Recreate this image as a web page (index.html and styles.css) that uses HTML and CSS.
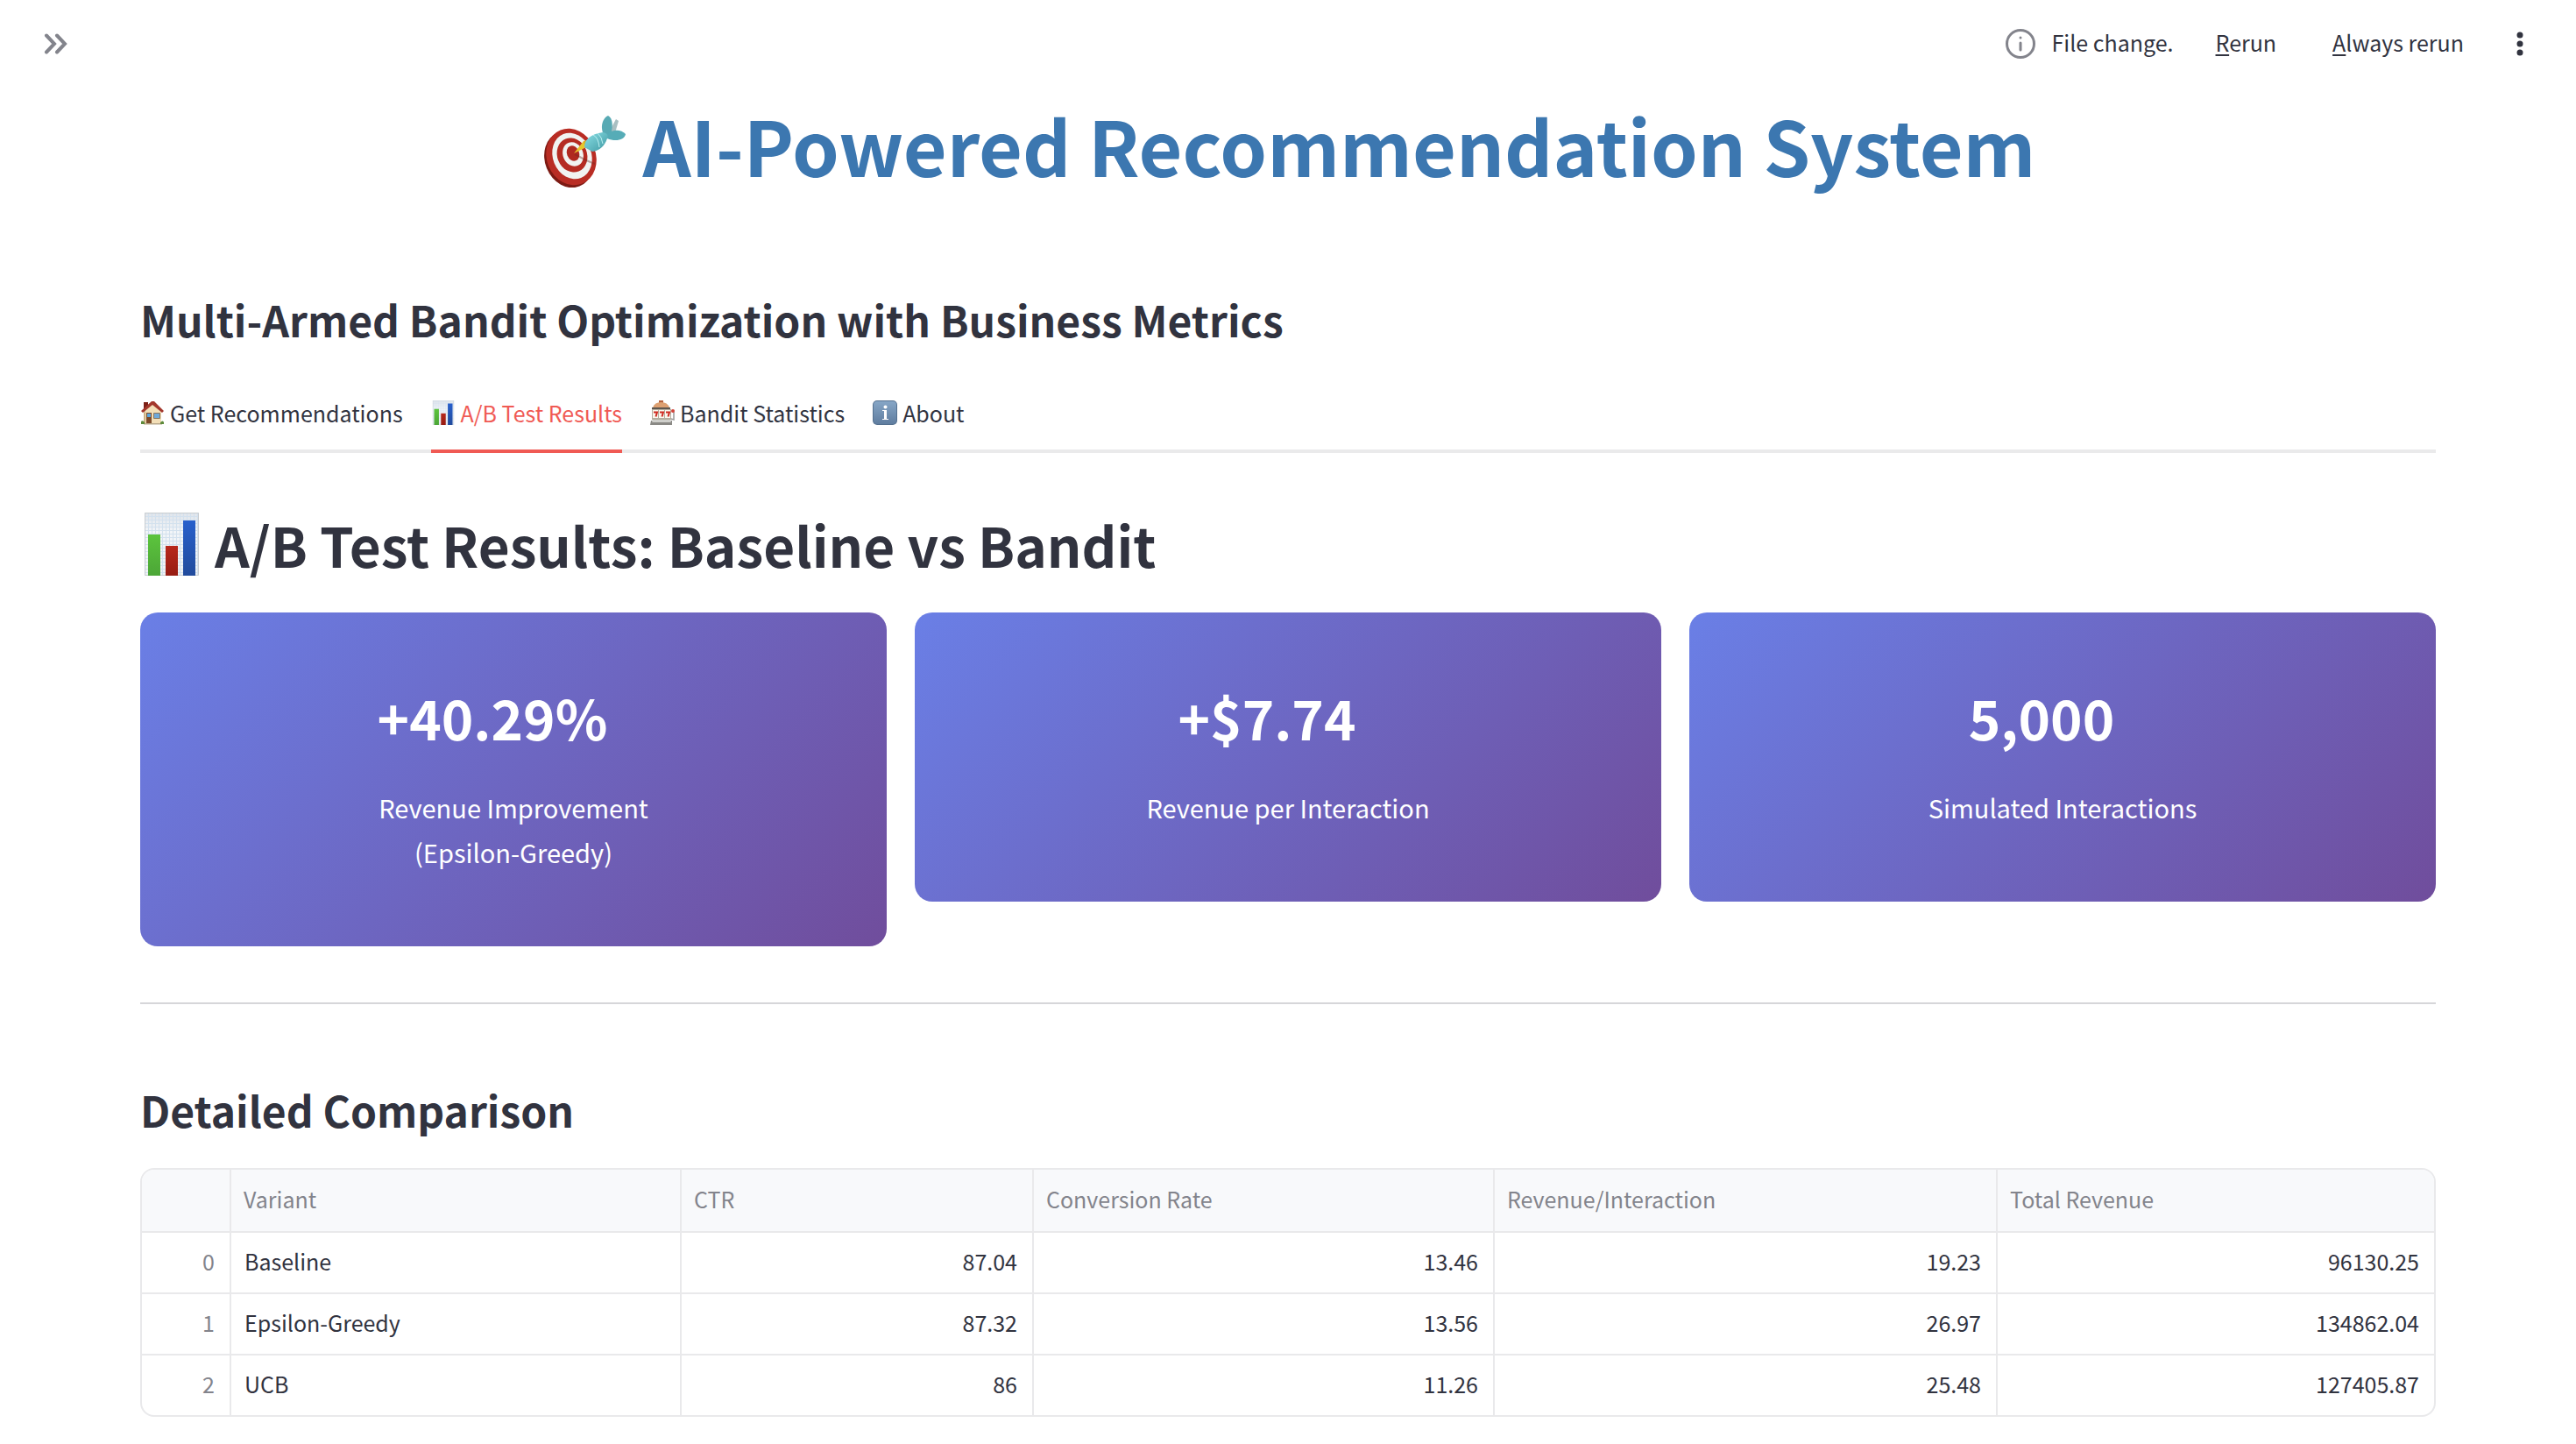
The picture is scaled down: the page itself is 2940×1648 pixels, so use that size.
FILE: index.html
```html
<!DOCTYPE html>
<html lang="en">
<head>
<meta charset="utf-8">
<title>AI-Powered Recommendation System</title>
<link rel="stylesheet" href="styles.css">
</head>
<body>
<svg class="sprite" aria-hidden="true">
  <defs>
    <linearGradient id="paper" x1="0" y1="0" x2="0" y2="1"><stop offset="0" stop-color="#dfe4ea"/><stop offset=".3" stop-color="#f2f5f8"/><stop offset="1" stop-color="#eef1f4"/></linearGradient>
    <linearGradient id="green" x1="0" y1="0" x2="0" y2="1"><stop offset="0" stop-color="#5cc43d"/><stop offset="1" stop-color="#4ca637"/></linearGradient>
    <linearGradient id="red" x1="0" y1="0" x2="0" y2="1"><stop offset="0" stop-color="#b8281c"/><stop offset="1" stop-color="#961c12"/></linearGradient>
    <linearGradient id="blue" x1="0" y1="0" x2="0" y2="1"><stop offset="0" stop-color="#2860cc"/><stop offset="1" stop-color="#214b9c"/></linearGradient>
    <linearGradient id="tile" x1="0" y1="0" x2="0" y2="1"><stop offset="0" stop-color="#86a6c6"/><stop offset="1" stop-color="#5f7d9f"/></linearGradient>
    <linearGradient id="dart" x1="0" y1="0" x2="1" y2="1"><stop offset="0" stop-color="#8be0e6"/><stop offset="1" stop-color="#3f98a2"/></linearGradient>
    <pattern id="grid" width="4" height="4" patternUnits="userSpaceOnUse"><path d="M0 .5H4M.5 0V4" stroke="#d3e1ee" stroke-width="1"/></pattern>
    <symbol id="chart" viewBox="0 0 62 72">
      <path fill="url(#paper)" d="M0 0h62v72H0z"/>
      <path fill="url(#grid)" d="M0 0h62v72H0z"/>
      <path fill="none" stroke="#c9cdd1" d="M.5.5h61v71H.5z"/>
      <path fill="url(#green)" d="M4 25h14v47H4z"/>
      <path fill="url(#red)" d="M24 38h14v34H24z"/>
      <path fill="url(#blue)" d="M44 9h14v63H44z"/>
    </symbol>
  </defs>
</svg>

<header class="toolbar">
  <button class="icon-button" aria-label="Open sidebar">
    <svg class="chevrons" viewBox="0 0 28 24"><path d="M3 2.500l9 9.500-9 9.500M15 2.500l9 9.500-9 9.500"/></svg>
  </button>
  <div class="status">
    <svg class="info" viewBox="0 0 36 36"><circle cx="18" cy="18" r="15.500"/><path d="M18 17v8"/><path d="M18 11v.1"/></svg>
    <span class="status-text">File change.</span>
    <button class="text-button"><u>R</u>erun</button>
    <button class="text-button"><u>A</u>lways rerun</button>
    <button class="icon-button" aria-label="Menu">
      <svg class="dots" viewBox="0 0 8 28"><circle cx="4" cy="4" r="3.500"/><circle cx="4" cy="14" r="3.500"/><circle cx="4" cy="24" r="3.500"/></svg>
    </button>
  </div>
</header>

<main class="page">
  <h1 class="title">
    <svg class="target" viewBox="0 0 96 82" aria-hidden="true">
      <ellipse cx="30" cy="50" rx="27" ry="33" transform="rotate(-22 30 50)" fill="#7c1a13"/>
      <ellipse cx="33" cy="47" rx="28" ry="33" transform="rotate(-22 33 47)" fill="#b92d24"/>
      <ellipse cx="34" cy="46" rx="22" ry="27" transform="rotate(-22 34 46)" fill="#f1f3f1"/>
      <ellipse cx="34" cy="45" rx="17" ry="20" transform="rotate(-22 34 45)" fill="#b52b22"/>
      <ellipse cx="35" cy="44" rx="11.500" ry="14" transform="rotate(-22 35 44)" fill="#f1f3f1"/>
      <ellipse cx="35" cy="43" rx="7" ry="9" transform="rotate(-22 35 43)" fill="#b02920"/>
      <path d="M37 44l13 7 10 4" stroke="#6d2a24" stroke-opacity=".4" stroke-width="2" fill="none"/>
      <path d="M36 43l11-14 5 6z" fill="#e6c62c"/>
      <path d="M47 29l8-2 1 9-7 1z" fill="#d6b021"/>
      <path d="M77 17L84 4l3 2-5 17z" fill="#a9bfc2"/>
      <path d="M70 22C65 11 70 2 75 0c6 3 6 14 2 24z" fill="#58aab4"/>
      <path d="M74 21c7-6 16-5 21 0-1 7-12 9-21 5z" fill="#56acb7"/>
      <path d="M48 36c0-9 7-15 21-17 5 1 7 4 5 7-3 9-9 14-17 15z" fill="url(#dart)"/>
      <path d="M58 22q6 3 7 14M63 20q5 4 6 12" stroke="#b9f0f2" stroke-width="1" fill="none"/>
    </svg>
    AI-Powered Recommendation System
  </h1>
  <h3 class="section-heading">Multi-Armed Bandit Optimization with Business Metrics</h3>

  <div class="tabs" role="tablist">
    <button class="tab" role="tab" aria-selected="false">
      <svg class="emoji" viewBox="0 0 28 28" aria-hidden="true">
        <path fill="#f3dfb8" d="M4 13L14 4l10 9v14H4z"/>
        <path fill="#cdb184" d="M4 14l2-2v15H4z"/>
        <path fill="#7b1f16" d="M4 2h5v6l-5 5z"/>
        <path fill="#a3372c" d="M1 12L13 1h3l11 11-2 2L14 5 3 14z"/>
        <path fill="#7d4a2a" d="M7 14h6v13H7z"/>
        <path fill="#5aa6e0" d="M8 15h4v4H8z"/>
        <path fill="#6fa9da" stroke="#8a765c" d="M15.500 14.500h7v6h-7z"/>
        <path fill="#b9a98c" d="M4 26h21v1.500H4z"/>
        <path fill="#5d8a3a" d="M1 24q2-2 4 1v2H1zM23 25q3-3 4 0v2h-4z"/>
      </svg>
      Get Recommendations
    </button>
    <button class="tab active" role="tab" aria-selected="true">
      <svg class="emoji" aria-hidden="true"><use href="#chart"/></svg>
      A/B Test Results
    </button>
    <button class="tab" role="tab" aria-selected="false">
      <svg class="emoji" viewBox="0 0 28 28" aria-hidden="true">
        <path fill="#b4603b" d="M10 0h5v3h-5z"/>
        <path fill="#dda071" d="M3 8q2-6 9.500-6T22 8z"/>
        <path fill="#5d574f" d="M2 8h21v2H2z"/>
        <path fill="#b5ae9f" d="M2 10h22v12H2z"/>
        <path fill="#fbf6ec" d="M3 11h6v9H3zM10 11h6v9h-6zM17 11h6v9h-6z"/>
        <path fill="none" stroke="#cf2a20" stroke-width="2" d="M4 13.500h4l-1.500 5M11 13.500h4l-1.500 5M18 13.500h4l-1.500 5"/>
        <path fill="#8a8985" d="M1 23h24v5H0z"/>
        <path fill="#cfcfcb" d="M3 22h20l1 3H2z"/>
        <path fill="none" stroke="#999" stroke-width="1.500" d="M24 21l3 1v-9"/><circle cx="26" cy="12" r="2" fill="#d2443a"/>
      </svg>
      Bandit Statistics
    </button>
    <button class="tab" role="tab" aria-selected="false">
      <svg class="emoji" viewBox="0 0 28 28" aria-hidden="true">
        <rect width="28" height="28" rx="5" fill="#54708f"/>
        <rect x="1" y="1" width="26" height="26" rx="4" fill="url(#tile)"/>
        <circle cx="14.500" cy="7.500" r="2" fill="#fff"/><path fill="#fff" d="M11 11h5v10h2v1h-7v-1h2v-9h-2z"/>
      </svg>
      About
    </button>
  </div>

  <h2 class="results-heading"><svg class="chart-icon" aria-hidden="true"><use href="#chart"/></svg>A/B Test Results: Baseline vs Bandit</h2>

  <section class="cards">
    <article class="card"><h2 class="value">+40.29%</h2><p class="label">Revenue Improvement<br>(Epsilon-Greedy)</p></article>
    <article class="card"><h2 class="value">+$7.74</h2><p class="label">Revenue per Interaction</p></article>
    <article class="card"><h2 class="value">5,000</h2><p class="label">Simulated Interactions</p></article>
  </section>

  <hr class="divider">

  <h3 class="section-heading">Detailed Comparison</h3>
  <div class="table-frame">
    <table class="data">
      <colgroup><col class="c-index"><col class="c-variant"><col class="c-ctr"><col class="c-rate"><col class="c-rev"><col class="c-total"></colgroup>
      <thead><tr><th></th><th>Variant</th><th>CTR</th><th>Conversion Rate</th><th>Revenue/Interaction</th><th>Total Revenue</th></tr></thead>
      <tbody>
        <tr><td class="index">0</td><td class="name">Baseline</td><td>87.04</td><td>13.46</td><td>19.23</td><td>96130.25</td></tr>
        <tr><td class="index">1</td><td class="name">Epsilon-Greedy</td><td>87.32</td><td>13.56</td><td>26.97</td><td>134862.04</td></tr>
        <tr><td class="index">2</td><td class="name">UCB</td><td>86</td><td>11.26</td><td>25.48</td><td>127405.87</td></tr>
      </tbody>
    </table>
  </div>
</main>
</body>
</html>
```
FILE: styles.css
```css
* { box-sizing: border-box; }

body {
  margin: 0;
  background: #fff;
  color: #31333f;
  font-family: "Noto Sans CJK SC", "Noto Sans", sans-serif;
  font-size: 25px;
  line-height: 40px;
}

h1, h2, h3, p { margin: 0; }

button {
  border: 0;
  padding: 0;
  background: none;
  color: inherit;
  font: inherit;
  cursor: pointer;
}

.sprite { position: absolute; width: 0; height: 0; }

.toolbar {
  display: flex;
  align-items: center;
  justify-content: space-between;
  height: 100px;
  padding: 0 48px 0 50px;
}

.icon-button { display: flex; }
.chevrons { width: 28px; height: 24px; fill: none; stroke: #83848c; stroke-width: 4; stroke-linecap: round; }

.status { display: flex; align-items: center; }
.info { width: 36px; height: 36px; margin-right: 18px; fill: none; stroke: #83848c; stroke-width: 3; stroke-linecap: round; }
.status-text { margin-right: 48px; padding-bottom: 4px; }
.text-button { margin-right: 64px; padding-bottom: 4px; }
.text-button:nth-last-child(2) { margin-right: 60px; }
.text-button + .icon-button { margin-right: 12px; }
.text-button u { text-underline-offset: 3px; }
.dots { width: 8px; height: 28px; fill: #31333f; }

.page { padding: 0 160px 32px; }

.title {
  display: flex;
  align-items: center;
  justify-content: center;
  gap: 18px;
  height: 130px;
  padding-left: 3px;
  color: #3c77b0;
  font-size: 86px;
  font-weight: 700;
  line-height: 130px;
}
.target { width: 96px; height: 82px; margin-top: 16px; }

.section-heading {
  font-size: 48px;
  font-weight: 600;
  line-height: 68px;
}
.title + .section-heading { margin-top: 100px; }

.tabs {
  display: flex;
  gap: 32px;
  margin-top: 34px;
  border-bottom: 4px solid #eaeaeb;
}
.tab {
  display: flex;
  align-items: center;
  gap: 6px;
  height: 85px;
  margin-bottom: -4px;
  padding-bottom: 4px;
  border-bottom: 4px solid transparent;
}
.tab.active { color: #f05a54; border-color: #f05a54; }
.emoji { width: 28px; height: 28px; }

.results-heading {
  display: flex;
  align-items: center;
  gap: 18px;
  height: 86px;
  margin-top: 61px;
  padding-left: 5px;
  font-size: 62px;
  font-weight: 600;
  line-height: 86px;
}
.chart-icon { width: 62px; height: 72px; }

.cards {
  display: grid;
  grid-template-columns: repeat(3, 1fr);
  align-items: start;
  gap: 32px;
  margin-top: 35px;
}
.card {
  padding: 76px 48px 82px;
  border-radius: 20px;
  background: linear-gradient(135deg, #6a7fe6, #704d9c);
  color: #fff;
  text-align: center;
}
.value { padding-right: 48px; font-size: 62px; font-weight: 600; line-height: 86px; }
.label { margin-top: 35px; font-size: 29px; line-height: 51px; }

.divider { height: 2px; margin: 64px 0 86px; border: 0; background: #d6d6d9; }

.table-frame {
  margin-top: 33px;
  overflow: hidden;
  border: 2px solid #e9e9eb;
  border-radius: 16px;
}
.data { width: 100%; border-collapse: separate; border-spacing: 0; table-layout: fixed; }
.data th, .data td { height: 70px; padding: 0 17px 4px 15px; border-right: 2px solid #e9e9eb; border-bottom: 2px solid #e9e9eb; font-weight: 400; }
.data th { height: 72px; background: #f8f9fb; color: #83848c; text-align: left; padding-left: 14px; }
.data td { text-align: right; }
.data td.index { color: #83848c; }
.data td.name { text-align: left; }
.data tr > :last-child { border-right: 0; }
.data tbody tr:last-child td { height: 68px; border-bottom: 0; }
.c-index { width: 102px; }
.c-variant { width: 514px; }
.c-ctr { width: 402px; }
.c-rate { width: 526px; }
.c-rev { width: 574px; }
```
